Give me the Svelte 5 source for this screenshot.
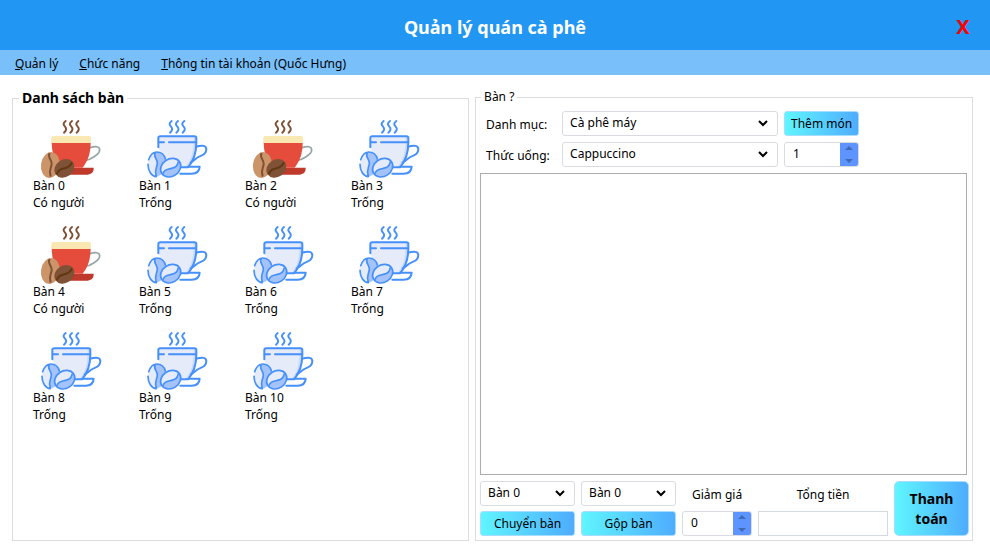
<script>
  const tables = [0, 1, 2, 3, 4, 5, 6, 7, 8, 9, 10].map((id) => ({
    id,
    busy: id === 0 || id === 2 || id === 4
  }));
  let quantity = $state(1);
  let discount = $state(0);
</script>

{#snippet busyCup()}
  <svg class="cup" viewBox="0 0 198 177" aria-hidden="true">
    <g fill="none" stroke="#7f5136" stroke-width="6" stroke-linecap="round">
      <path d="M83 9c-9 7-7 12-2 17s5 11-3 18" />
      <path d="M102 9c-9 7-7 12-2 17s5 11-3 18" />
      <path d="M121 9c-9 7-7 12-2 17s5 11-3 18" />
    </g>
    <path d="M134 125c12 6 22-1 31-7 12-8 20-11 20-22 0-12-13-12-32-6" fill="none" stroke="#95a5a5" stroke-width="5" />
    <path d="M70 149h97c1 15-10 21-22 21H78z" fill="#c03a2b" />
    <path d="M41 73h117c0 32-8 56-24 76H65C49 130 42 106 41 73z" fill="#e64c3c" />
    <path d="M40 75V60q0-6 7-6h106q6 0 6 6v15z" fill="#f9e8b1" />
    <ellipse cx="37" cy="141" rx="28" ry="39" fill="#cc9469" transform="rotate(8 37 141)" />
    <path d="M35 105c-8 13 6 18 6 32 0 13-10 18-3 39" fill="none" stroke="#7f5136" stroke-width="6" />
    <ellipse cx="79" cy="151" rx="32" ry="26" fill="#7f5136" transform="rotate(-34 79 151)" />
    <path d="M56 169c5-14 13-15 24-18 14-4 18-8 22-18" fill="none" stroke="#603812" stroke-width="6" />
  </svg>
{/snippet}

{#snippet freeCup()}
  <svg class="cup" viewBox="0 0 198 177" aria-hidden="true">
    <path d="M42 55h115v19c0 30-7 53-24 74l-30-4-13-21-28 5C51 113 43 92 42 70z" fill="#e6ebfa" />
    <path d="M149 56h8v18c0 30-7 53-24 74h-10c19-21 26-43 26-92z" fill="#c9dafb" />
    <g fill="none" stroke="#4590fb" stroke-width="6" stroke-linecap="round" stroke-linejoin="round">
      <path d="M83 9c-9 7-7 12-2 17s5 11-3 18" />
      <path d="M102 9c-9 7-7 12-2 17s5 11-3 18" />
      <path d="M121 9c-9 7-7 12-2 17s5 11-3 18" />
      <path d="M43 88V60q0-5 6-5h102q6 0 6 5v14c0 33-8 54-25 74h-21" />
      <path d="M44 73h16M75 73h81" />
      <path d="M156 86c19-5 31-4 31 8s-8 16-20 21c-12 4-15 14-27 18" />
      <path d="M134 146h33q-1 21-24 21h-34" />
    </g>
    <ellipse cx="38" cy="139" rx="26" ry="37" fill="#e6ebfa" />
    <path d="M34 103c-8 13 6 18 6 32 0 13-10 18-3 40 20-3 28-20 28-38 0-25-14-36-31-34z" fill="#a5c3fb" />
    <path d="M14 125c5-14 13-23 24-23 14 0 23 9 26 21M12 139c0 19 10 36 25 37M34 103c-8 13 6 18 6 32 0 13-10 18-3 40" fill="none" stroke="#4590fb" stroke-width="5" stroke-linecap="round" />
    <ellipse cx="80" cy="149" rx="32" ry="26" fill="#e6ebfa" transform="rotate(-34 80 149)" />
    <path d="M56 170c5-16 14-16 26-19 15-3 18-8 21-22 8 11 7 24-3 35-12 13-32 17-44 6z" fill="#a5c3fb" />
    <ellipse cx="80" cy="149" rx="32" ry="26" fill="none" stroke="#4590fb" stroke-width="5" transform="rotate(-34 80 149)" />
    <path d="M56 168c5-14 14-14 26-17 15-3 18-8 21-20" fill="none" stroke="#4590fb" stroke-width="5" />
  </svg>
{/snippet}

{#snippet picker(id, label, value)}
  <span class="picker">
    <select {id} aria-label={label}><option>{value}</option></select>
    <svg viewBox="0 0 10 7" aria-hidden="true"><path d="M1 1l4 4 4-4" /></svg>
  </span>
{/snippet}

<div class="app">
  <header>
    <h1>Quản lý quán cà phê</h1>
    <button class="close" type="button">X</button>
  </header>

  <nav>
    <a href="#manage"><u>Q</u>uản lý</a>
    <a href="#functions"><u>C</u>hức năng</a>
    <a href="#account"><u>T</u>hông tin tài khoản (Quốc Hưng)</a>
  </nav>

  <main>
    <fieldset class="tables">
      <legend>Danh sách bàn</legend>
      <div class="grid">
        {#each tables as table (table.id)}
          <button class="table" type="button">
            {#if table.busy}{@render busyCup()}{:else}{@render freeCup()}{/if}
            <span>Bàn {table.id}</span>
            <span>{table.busy ? 'Có người' : 'Trống'}</span>
          </button>
        {/each}
      </div>
    </fieldset>

    <fieldset class="order">
      <legend>Bàn ?</legend>
      <div class="body">
        <div class="choose">
          <label for="category">Danh mục:</label>
          {@render picker('category', undefined, 'Cà phê máy')}
          <button class="action" type="button">Thêm món</button>
          <label for="drink">Thức uống:</label>
          {@render picker('drink', undefined, 'Cappuccino')}
          <span class="spinner">
            <input type="number" aria-label="Số lượng" bind:value={quantity} />
            <span class="steps">
              <button type="button" aria-label="Tăng" onclick={() => quantity++}><i class="up"></i></button>
              <button type="button" aria-label="Giảm" onclick={() => quantity--}><i class="down"></i></button>
            </span>
          </span>
        </div>

        <div class="bill"></div>

        <div class="footer">
          {@render picker('from', 'Từ bàn', 'Bàn 0')}
          {@render picker('to', 'Đến bàn', 'Bàn 0')}
          <label class="center" for="discount">Giảm giá</label>
          <label class="center" for="total">Tổng tiền</label>
          <button class="action pay" type="button">Thanh toán</button>
          <button class="action" type="button">Chuyển bàn</button>
          <button class="action" type="button">Gộp bàn</button>
          <span class="spinner">
            <input id="discount" type="number" bind:value={discount} />
            <span class="steps">
              <button type="button" aria-label="Tăng" onclick={() => discount++}><i class="up"></i></button>
              <button type="button" aria-label="Giảm" onclick={() => discount--}><i class="down"></i></button>
            </span>
          </span>
          <input id="total" class="total" type="text" readonly />
        </div>
      </div>
    </fieldset>
  </main>
</div>

<style>
  :global(body) {
    margin: 0;
  }
  .app,
  .app * {
    box-sizing: border-box;
  }
  .app {
    display: flex;
    flex-direction: column;
    min-height: 100vh;
    background: #fff;
    color: #000;
    font: 12px/17px 'Noto Sans', 'Open Sans', sans-serif;
  }
  button,
  input,
  select {
    margin: 0;
    padding: 0;
    border: 0;
    background: none;
    color: inherit;
    font: inherit;
  }
  header {
    display: grid;
    grid-template-columns: 54px 1fr 54px;
    align-items: center;
    height: 50px;
    padding-top: 3px;
    background: #2196f3;
  }
  h1 {
    grid-column: 2;
    margin: 0;
    color: #fff;
    font-size: 18px;
    line-height: 24px;
    text-align: center;
  }
  .close {
    color: #f00;
    font-size: 20px;
    font-weight: 700;
    line-height: 24px;
  }
  nav {
    display: flex;
    gap: 21px;
    align-items: center;
    height: 25px;
    padding: 2px 15px 0;
    background: #79bffa;
  }
  nav a {
    color: inherit;
    text-decoration: none;
  }
  main {
    display: flex;
    flex: 1;
    gap: 6px;
    padding: 13px 17px 9px 12px;
  }
  fieldset {
    display: flex;
    flex-direction: column;
    margin: 0;
    padding: 0;
    border: 1px solid #dcdcdc;
  }
  legend {
    padding: 0 3px;
  }
  .tables {
    flex: 457 1 0;
  }
  .tables legend {
    margin-left: 6px;
    font-size: 14px;
    font-weight: 700;
    line-height: 20px;
  }
  .order {
    flex: 498 1 0;
  }
  .order legend {
    margin-left: 5px;
    line-height: 18px;
  }
  .grid {
    display: grid;
    grid-template-columns: repeat(auto-fill, 76px);
    gap: 13px 30px;
    padding: 10px 20px;
  }
  .table {
    display: flex;
    flex-direction: column;
    text-align: left;
  }
  .cup {
    width: 66px;
    height: 59px;
    margin-left: 5px;
    overflow: visible;
  }
  .body {
    display: flex;
    flex: 1;
    flex-direction: column;
    gap: 6px;
    height: 100%;
    padding: 5px 3px 4px 4px;
  }
  .choose {
    display: grid;
    grid-template-columns: 70px minmax(0, 216px) 75px;
    gap: 6px;
    padding-left: 6px;
  }
  label {
    align-self: center;
    padding-top: 2px;
  }
  .bill {
    flex: 1;
    min-height: 100px;
    margin-right: 2px;
    border: 1px solid #acacac;
  }
  .footer {
    display: grid;
    grid-template-columns: 95px 95px 70px 1fr 75px;
    gap: 5px 6px;
  }
  .center {
    text-align: center;
  }
  .picker {
    display: grid;
    align-items: center;
    height: 25px;
  }
  .picker > * {
    grid-area: 1 / 1;
  }
  .picker select {
    width: 100%;
    height: 25px;
    padding: 0 24px 2px 7px;
    border: 1px solid #d9dbe0;
    border-radius: 3px;
    appearance: none;
    background: #fff;
  }
  .picker svg {
    justify-self: end;
    width: 10px;
    height: 7px;
    margin-right: 10px;
    fill: none;
    stroke: #000;
    stroke-width: 2;
    pointer-events: none;
  }
  .action {
    height: 25px;
    border: 1px solid #a6dcff;
    border-radius: 3px;
    background: linear-gradient(90deg, #5ff5ff, #4facfe);
    white-space: nowrap;
  }
  .pay {
    grid-area: 1 / 5 / 3 / 6;
    height: auto;
    padding: 0 10px;
    border-radius: 5px;
    font-size: 14px;
    font-weight: 700;
    line-height: 20px;
    white-space: normal;
  }
  .spinner {
    display: flex;
    height: 25px;
    overflow: hidden;
    border: 1px solid #d9dbe0;
    border-radius: 3px;
  }
  .spinner input {
    flex: 1;
    min-width: 0;
    padding: 0 0 2px 8px;
    appearance: textfield;
  }
  .spinner input::-webkit-inner-spin-button {
    appearance: none;
  }
  .steps {
    display: flex;
    flex-direction: column;
    width: 18px;
    background: #5e94ff;
  }
  .steps button {
    display: flex;
    flex: 1;
    justify-content: center;
    padding: 3px 0;
  }
  .steps button:last-child {
    align-items: flex-end;
  }
  .steps i {
    width: 0;
    height: 0;
    border: 4px solid transparent;
  }
  .steps .up {
    border-top: 0;
    border-bottom-color: #4169b4;
  }
  .steps .down {
    border-bottom: 0;
    border-top-color: #4169b4;
  }
  .total {
    width: 100%;
    min-width: 0;
    height: 25px;
    padding: 0 6px;
    border: 1px solid #d5dade;
  }
</style>
